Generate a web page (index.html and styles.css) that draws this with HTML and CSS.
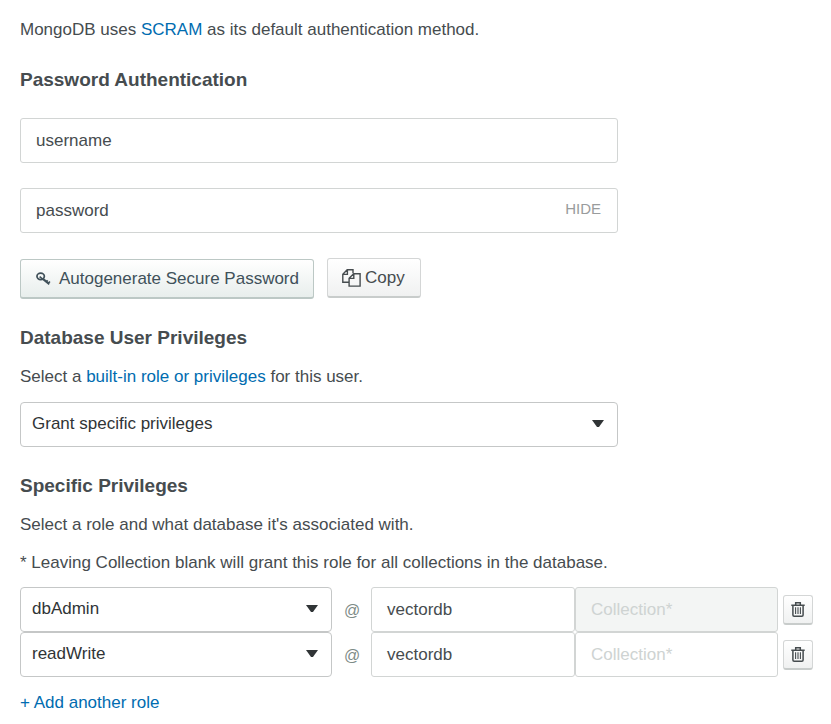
FILE: index.html
```html
<!DOCTYPE html>
<html lang="en">
<head>
<meta charset="utf-8">
<title>Add New User</title>
<link rel="stylesheet" href="styles.css">
</head>
<body>
<svg width="0" height="0" class="sprite" aria-hidden="true">
  <symbol id="trash" viewBox="0 0 14 15">
    <path d="M0.3 3.2H13.7M4.7 3V.8H9.3V3M1.9 3.5V13q0 1.2 1.2 1.2h7.8q1.2 0 1.2-1.2V3.5" fill="none" stroke="currentColor" stroke-width="1.5"/>
    <path d="M4.6 5.3v6.6M7 5.3v6.6M9.4 5.3v6.6" fill="none" stroke="currentColor" stroke-width="1.1"/>
  </symbol>
</svg>
<main class="form">
  <p class="text intro"><span class="t1">MongoDB uses <a class="link">SCRAM</a> as its default authentication method.</span></p>
  <h2 class="heading auth-heading"><span class="h1">Password Authentication</span></h2>
  <div class="input wide"><span class="t2">username</span></div>
  <div class="input wide password"><span class="t3">password</span><span class="hide">HIDE</span></div>
  <div class="buttons">
    <button class="button generate">
      <svg class="key" width="17" height="16" viewBox="0 0 17 16"><ellipse cx="5.3" cy="5" rx="4.2" ry="3.7" fill="none" stroke="currentColor" stroke-width="2"/><path d="M4.1 5.2 15 14.2M8 7.5l6 4.900M11.200 11.8l2-2.500M13.500 13.600l2.300-2.800" fill="none" stroke="currentColor" stroke-width="1.8"/></svg>
      <span class="t4">Autogenerate Secure Password</span>
    </button>
    <button class="button copy">
      <svg class="copy-icon" width="19" height="18" viewBox="0 0 19 18" fill="none" stroke="currentColor" stroke-width="1.4"><path d="M7 13.300H.8V5.200L5.200.8H11v3.500M5.400.8v4.600H.8"/><path d="M11.700 4.700h6.400v12.400H7.100V9.200zM11.800 4.700v4.700H7.100"/></svg>
      <span class="t5">Copy</span>
    </button>
  </div>
  <h2 class="heading user-heading"><span class="h2">Database User Privileges</span></h2>
  <p class="text"><span class="t6">Select a <a class="link">built-in role or privileges</a> for this user.</span></p>
  <div class="select wide"><span class="t7">Grant specific privileges</span><i class="arrow"></i></div>
  <h2 class="heading specific-heading"><span class="h3">Specific Privileges</span></h2>
  <p class="text"><span class="t8">Select a role and what database it's associated with.</span></p>
  <p class="text note"><span class="t9">* Leaving Collection blank will grant this role for all collections in the database.</span></p>
  <div class="role">
    <div class="select"><span class="t10">dbAdmin</span><i class="arrow"></i></div>
    <span class="at">@</span>
    <div class="input"><span class="t11">vectordb</span></div>
    <div class="input collection disabled"><span class="t12">Collection*</span></div>
    <button class="button trash"><svg width="14" height="15"><use href="#trash"/></svg></button>
  </div>
  <div class="role">
    <div class="select"><span class="t13">readWrite</span><i class="arrow"></i></div>
    <span class="at">@</span>
    <div class="input"><span class="t11">vectordb</span></div>
    <div class="input collection"><span class="t12">Collection*</span></div>
    <button class="button trash"><svg width="14" height="15"><use href="#trash"/></svg></button>
  </div>
  <p class="text add"><a class="link t14">+ Add another role</a></p>
</main>
</body>
</html>
```
FILE: styles.css
```css
* { box-sizing: border-box; }
body {
  margin: 0;
  background: #fff;
  color: #464c4f;
  font: 17px/24px "Liberation Sans", Arial, sans-serif;
}
.sprite { display: block; }
.form { padding: 18px 18px 0 20px; }
.text, .heading { margin: 0; height: 24px; white-space: nowrap; }
.heading { font-size: 19px; font-weight: 700; }
.link { color: #006cb0; }
.auth-heading { margin: 26px 0 26px; }
.input, .select {
  display: flex;
  align-items: center;
  height: 45px;
  border: 1px solid #d2d5d4;
  border-radius: 3px;
  background: #fff;
}
.input { padding: 1px 16px 0 15px; }
.select { justify-content: space-between; padding: 0 13px 2px 11px; border-color: #c5c7c7; border-radius: 4px; color: #303436; }
.wide { width: 598px; }
.password { justify-content: space-between; margin-top: 25px; }
.hide { color: #999c9d; font-size: 15px; padding-bottom: 4px; }
.buttons { display: flex; gap: 13px; margin-top: 25px; }
.button {
  display: flex;
  align-items: center;
  height: 40px;
  padding: 0 14px;
  border: 1px solid #d4d6d6;
  border-bottom: 2px solid #c8cccb;
  border-radius: 3px;
  background: linear-gradient(#fff, #f0f1f1);
  color: #464c4f;
  font: inherit;
  white-space: nowrap;
}
.generate { width: 294px; margin-top: 1px; border-color: #bcc8c5; background: linear-gradient(#fff, #e8eeec); color: #40515a; }
.key { margin: 0 8px 0 1px; }
.copy { width: 94px; }
.copy-icon { margin-right: 4px; }
.user-heading { margin: 27px 0 15px; }
.user-heading + .text { margin-bottom: 13px; }
.arrow { width: 12px; height: 7px; background: #303436; clip-path: polygon(0 0, 100% 0, 58% 100%, 42% 100%); }
.specific-heading { margin: 27px 0 15px; }
.note { margin: 14px 0 12px; }
.role { display: grid; grid-template-columns: 312px 39px 204px 203px 30px; align-items: center; }
.at { color: #7d8b87; font-size: 16px; padding: 2px 0 0 12px; }
.collection { color: #ced3d2; }
.disabled { background: #f3f5f4; }
.trash { justify-content: center; width: 30px; height: 30px; margin-left: 5px; padding: 0; }
.add { margin-top: 14px; }
```
